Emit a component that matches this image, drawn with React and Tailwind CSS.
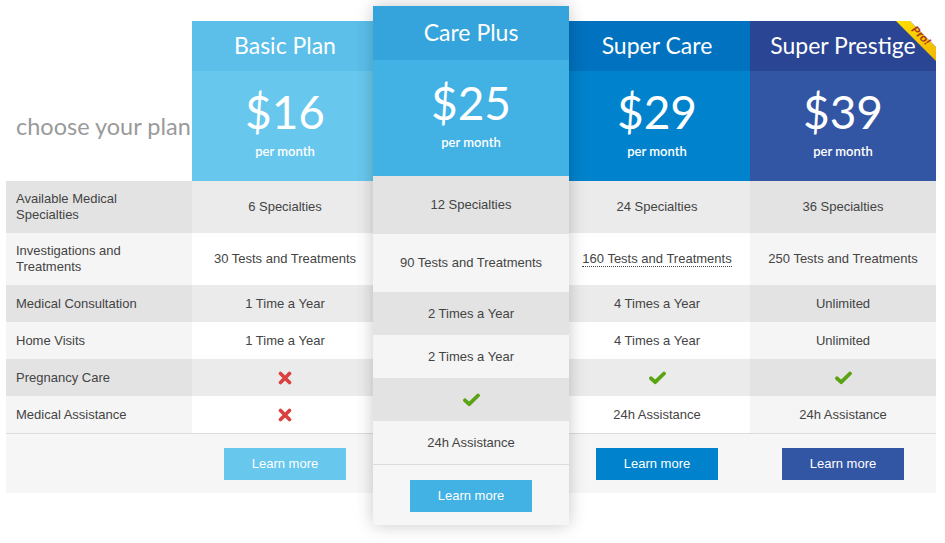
import React from 'react';

const rows = [
    { label: ['Available Medical', 'Specialties'], h: 'h-[52px]', fh: 'h-[58px]' },
    { label: ['Investigations and', 'Treatments'], h: 'h-[52px]', fh: 'h-[58px]' },
    { label: ['Medical Consultation'], h: 'h-[37px]', fh: 'h-[43px]' },
    { label: ['Home Visits'], h: 'h-[37px]', fh: 'h-[43px]' },
    { label: ['Pregnancy Care'], h: 'h-[37px]', fh: 'h-[43px]' },
    { label: ['Medical Assistance'], h: 'h-[37px]', fh: 'h-[43px]' },
];

const plans = [
    {
        name: 'Basic Plan', price: '$16',
        titleBg: 'bg-[#5bbfea]', priceBg: 'bg-[#68c7ed]', btnBg: 'bg-[#68c7ed]',
        dark: false,
        cells: ['6 Specialties', '30 Tests and Treatments', '1 Time a Year', '1 Time a Year', 'no', 'no'],
    },
    {
        name: 'Care Plus', price: '$25', featured: true,
        titleBg: 'bg-[#36a4dc]', priceBg: 'bg-[#42b1e4]', btnBg: 'bg-[#42b1e4]',
        dark: true,
        cells: ['12 Specialties', '90 Tests and Treatments', '2 Times a Year', '2 Times a Year', 'yes', '24h Assistance'],
    },
    {
        name: 'Super Care', price: '$29',
        titleBg: 'bg-[#0072bf]', priceBg: 'bg-[#0083cc]', btnBg: 'bg-[#0083cc]',
        dark: false, dotted: true,
        cells: ['24 Specialties', '160 Tests and Treatments', '4 Times a Year', '4 Times a Year', 'yes', '24h Assistance'],
    },
    {
        name: 'Super Prestige', price: '$39', pro: true,
        titleBg: 'bg-[#2a4593]', priceBg: 'bg-[#3255a4]', btnBg: 'bg-[#3255a4]',
        dark: true,
        cells: ['36 Specialties', '250 Tests and Treatments', 'Unlimited', 'Unlimited', 'yes', '24h Assistance'],
    },
];

function Cross() {
    return (
        <svg width="14" height="14" viewBox="0 0 14 14">
            <path d="M2.5 2.5 L11.5 11.5 M11.5 2.5 L2.5 11.5" stroke="#d9403e" strokeWidth="3.6" strokeLinecap="round" />
        </svg>
    );
}

function Check() {
    return (
        <svg width="17" height="14" viewBox="0 0 17 14">
            <path d="M2 7.3 L6.2 11.2 L15 2.5" stroke="#5aa312" strokeWidth="3.8" fill="none" strokeLinecap="round" strokeLinejoin="round" />
        </svg>
    );
}

function Cell({ value, dotted }) {
    if (value === 'yes') return <Check />;
    if (value === 'no') return <Cross />;
    if (dotted) return <span className="border-b border-dotted border-[#444] leading-[15px]">{value}</span>;
    return <span>{value}</span>;
}

function rowBg(i, dark) {
    if (i % 2 === 0) return dark ? 'bg-[#e3e3e3]' : 'bg-[#ebebeb]';
    return dark ? 'bg-[#f5f5f5]' : 'bg-white';
}

function PlanColumn({ plan }) {
    const f = plan.featured;
    return (
        <div className={f
            ? 'w-[196px] mt-[6px] -mx-[5px] flex flex-col relative z-10 shadow-[0_0_16px_rgba(0,0,0,0.22)]'
            : 'w-[186px] mt-[21px] flex flex-col relative'}>
            <div className={`${plan.titleBg} ${f ? 'h-[54px] pb-[2px]' : 'h-[50px] pb-[2px]'} flex items-center justify-center text-white text-[23px] font-['Lato',sans-serif] relative overflow-hidden`}>
                {plan.name}
                {plan.pro && (
                    <div className="absolute top-0 right-0 w-[40px] h-[40px]">
                        <svg width="40" height="40" viewBox="0 0 40 40" className="absolute inset-0">
                            <defs>
                                <linearGradient id="rib" x1="0" y1="0" x2="1" y2="1">
                                    <stop offset="0" stopColor="#ffe000" />
                                    <stop offset="1" stopColor="#f2b600" />
                                </linearGradient>
                            </defs>
                            <polygon points="0,0 14,0 40,26 40,40" fill="url(#rib)" />
                            <polygon points="14,0 40,0 40,26" fill="#ffffff" />
                        </svg>
                        <span className="absolute left-[14px] top-[9px] rotate-45 text-[11px] font-bold italic text-[#b0321e] font-['Liberation_Sans',sans-serif] leading-none">Pro!</span>
                    </div>
                )}
            </div>
            <div className={`${plan.priceBg} ${f ? 'h-[116px] pt-[18px]' : 'h-[110px] pt-[16px]'} flex flex-col items-center text-white font-['Lato',sans-serif]`}>
                <div className="text-[46px] leading-[50px]">{plan.price}</div>
                <div className="text-[13px] font-semibold leading-[16px] mt-[6px]">per month</div>
            </div>
            {rows.map((r, i) => (
                <div key={i} className={`${f ? r.fh : r.h} ${rowBg(i, plan.dark)} flex items-center justify-center text-[13px] text-[#444] font-['Liberation_Sans',sans-serif]`}>
                    <Cell value={plan.cells[i]} dotted={plan.dotted && i === 1} />
                </div>
            ))}
            <div className={`${f ? 'h-[61px] pt-[15px]' : 'h-[60px] pt-[14px]'} border-t border-[#dcdcdc] bg-[#f6f6f6] flex justify-center`}>
                <button className={`${plan.btnBg} w-[122px] h-[32px] text-white text-[13px] font-['Liberation_Sans',sans-serif]`}>Learn more</button>
            </div>
        </div>
    );
}

export default function App() {
    return (
        <div className="w-[945px] h-[543px] bg-white overflow-hidden">
            <div className="flex items-start pl-[6px]">
                <div className="w-[186px] mt-[21px] flex flex-col">
                    <div className="h-[160px] flex items-end pb-[41px] pl-[10px]">
                        <span className="text-[23.5px] leading-[28px] text-[#9a9a9a] font-['Lato',sans-serif] whitespace-nowrap">choose your plan</span>
                    </div>
                    {rows.map((r, i) => (
                        <div key={i} className={`${r.h} ${rowBg(i, true)} flex flex-col justify-center pl-[10px] text-[13px] leading-[16px] text-[#444] font-['Liberation_Sans',sans-serif]`}>
                            {r.label.map((l, j) => <div key={j}>{l}</div>)}
                        </div>
                    ))}
                    <div className="h-[60px] border-t border-[#dcdcdc] bg-[#f6f6f6]"></div>
                </div>
                {plans.map(p => <PlanColumn key={p.name} plan={p} />)}
            </div>
        </div>
    );
}
